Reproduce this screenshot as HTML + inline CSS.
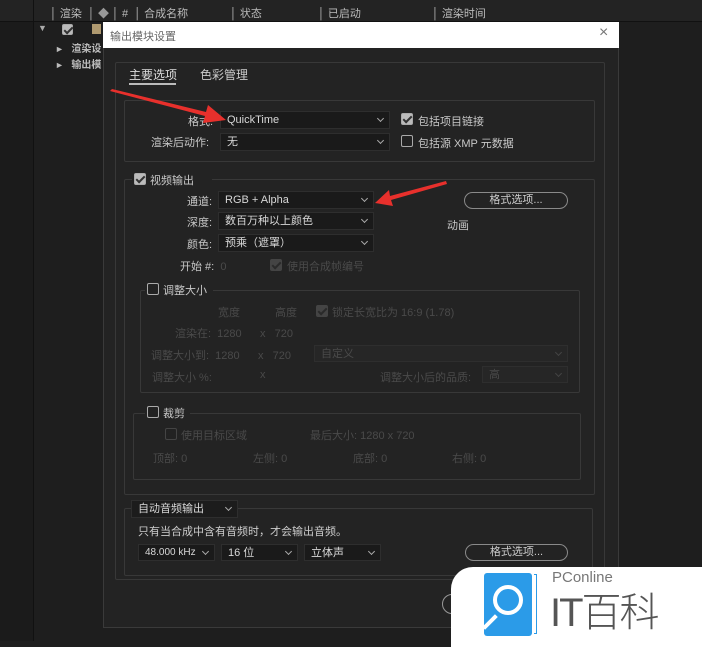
<!DOCTYPE html>
<html><head><meta charset="utf-8"><style>
*{margin:0;padding:0;box-sizing:border-box}
body{width:702px;height:641px;overflow:hidden;background:#1e1e1e;font-family:"Liberation Sans","Noto Sans CJK SC",sans-serif;font-size:11px;color:#c8c8c8;position:relative}
.a{position:absolute;white-space:nowrap}
.fr{position:absolute;border:1px solid #383838;border-radius:2px}
.sel{position:absolute;background:#1a1a1a;border:1px solid #2e2e2e;color:#d8d8d8;padding-left:6px;line-height:16px;font-size:11px}
.sel:after{content:"";position:absolute;right:6px;top:4px;width:4px;height:4px;border-right:1px solid #aaa;border-bottom:1px solid #aaa;transform:rotate(45deg)}
.dis{color:#4a4a4a}
.sel.dis{color:#4a4a4a;background:#262626}
.sel.dis:after{border-color:#444}
.cb{position:absolute;width:12px;height:12px;border:1px solid #aaa;border-radius:2px;background:#222}
.cb.on{background:#bbb}
.cb.on:after{content:"";position:absolute;left:3px;top:0px;width:3px;height:7px;border-right:2px solid #333;border-bottom:2px solid #333;transform:rotate(45deg)}
.cb.d{border-color:#444}
.cb.d.on{background:#444}
.cb.d.on:after{border-color:#2a2a2a}
.btn{position:absolute;border:1px solid #8a8a8a;border-radius:9px;text-align:center;color:#ccc;line-height:15px}
</style></head><body>
<div class="a" style="left:0;top:0;width:702px;height:22px;background:#232323;border-bottom:1px solid #111"></div>
<div class="a" style="left:33px;top:0;width:1px;height:641px;background:#111"></div>
<div class="a" style="left:0;top:22px;width:33px;height:619px;background:#1b1b1b"></div>
<div class="a" style="left:50px;top:5px;color:#bbb">│ 渲染&nbsp;&nbsp;│ <span style="color:#999">◆</span> │ # &nbsp;│ 合成名称</div>
<div class="a" style="left:230px;top:5px;color:#bbb">│ 状态</div>
<div class="a" style="left:318px;top:5px;color:#bbb">│ 已启动</div>
<div class="a" style="left:432px;top:5px;color:#bbb">│ 渲染时间</div>
<div class="a" style="left:38px;top:23px;color:#aaa;font-size:9px">▼</div>
<div class="cb on" style="left:62px;top:24px;width:11px;height:11px"></div>
<div class="a" style="left:92px;top:24px;width:9px;height:10px;background:#b09a70"></div>
<div class="a" style="left:55px;top:40px;color:#bbb;font-size:9px">►&nbsp;&nbsp; <b style="font-size:10px">渲染设</b></div>
<div class="a" style="left:55px;top:56px;color:#bbb;font-size:9px">►&nbsp;&nbsp; <b style="font-size:10px">输出模</b></div>
<div class="a" style="left:103px;top:22px;width:516px;height:606px;background:#232323;border:1px solid #3a3a3a"></div>
<div class="a" style="left:103px;top:22px;width:516px;height:26px;background:#fff"></div>
<div class="a" style="left:110px;top:28px;color:#666">输出模块设置</div>
<div class="a" style="left:599px;top:24px;color:#777;font-size:16px">×</div>
<div class="fr" style="left:115px;top:62px;width:490px;height:518px"></div>
<div class="a" style="left:129px;top:66px;color:#ddd;font-size:12px">主要选项</div>
<div class="a" style="left:129px;top:83px;width:47px;height:2px;background:#bbb"></div>
<div class="a" style="left:200px;top:66px;color:#ccc;font-size:12px">色彩管理</div>
<div class="fr" style="left:124px;top:100px;width:471px;height:62px"></div>
<div class="a" style="left:188px;top:113px">格式:</div>
<div class="sel" style="left:220px;top:111px;width:170px;height:18px">QuickTime</div>
<div class="a" style="left:151px;top:134px">渲染后动作:</div>
<div class="sel" style="left:220px;top:133px;width:170px;height:18px">无</div>
<div class="cb on" style="left:401px;top:113px"></div>
<div class="a" style="left:418px;top:113px">包括项目链接</div>
<div class="cb" style="left:401px;top:135px"></div>
<div class="a" style="left:418px;top:135px">包括源 XMP 元数据</div>
<div class="fr" style="left:124px;top:179px;width:471px;height:316px"></div>
<div class="a" style="left:132px;top:172px;width:80px;height:14px;background:#232323"></div>
<div class="cb on" style="left:134px;top:173px"></div>
<div class="a" style="left:150px;top:172px">视频输出</div>
<div class="a" style="left:187px;top:193px">通道:</div>
<div class="sel" style="left:218px;top:191px;width:156px;height:18px">RGB + Alpha</div>
<div class="a" style="left:187px;top:214px">深度:</div>
<div class="sel" style="left:218px;top:212px;width:156px;height:18px">数百万种以上颜色</div>
<div class="a" style="left:187px;top:236px">颜色:</div>
<div class="sel" style="left:218px;top:234px;width:156px;height:18px">预乘（遮罩）</div>
<div class="btn" style="left:464px;top:192px;width:104px;height:17px">格式选项...</div>
<div class="a" style="left:447px;top:217px">动画</div>
<div class="a" style="left:180px;top:258px">开始 #: <span class="dis">&nbsp;0</span></div>
<div class="cb d on" style="left:270px;top:259px"></div>
<div class="a dis" style="left:287px;top:258px">使用合成帧编号</div>
<div class="fr" style="left:140px;top:290px;width:440px;height:103px"></div>
<div class="a" style="left:145px;top:282px;width:68px;height:14px;background:#232323"></div>
<div class="cb" style="left:147px;top:283px"></div>
<div class="a" style="left:163px;top:282px">调整大小</div>
<div class="a dis" style="left:218px;top:304px">宽度</div>
<div class="a dis" style="left:275px;top:304px">高度</div>
<div class="cb d on" style="left:316px;top:305px"></div>
<div class="a dis" style="left:332px;top:304px">锁定长宽比为 16:9 (1.78)</div>
<div class="a dis" style="left:175px;top:325px">渲染在: &nbsp;1280&nbsp;&nbsp;&nbsp;&nbsp;&nbsp;&nbsp;x&nbsp;&nbsp;&nbsp;720</div>
<div class="a dis" style="left:151px;top:347px">调整大小到: &nbsp;1280&nbsp;&nbsp;&nbsp;&nbsp;&nbsp;&nbsp;x&nbsp;&nbsp;&nbsp;720</div>
<div class="sel dis" style="left:314px;top:345px;width:254px;height:17px">自定义</div>
<div class="a dis" style="left:152px;top:369px">调整大小 %:</div>
<div class="a dis" style="left:260px;top:369px">x</div>
<div class="a dis" style="left:380px;top:369px">调整大小后的品质:</div>
<div class="sel dis" style="left:482px;top:366px;width:86px;height:17px">高</div>
<div class="fr" style="left:133px;top:413px;width:448px;height:67px"></div>
<div class="a" style="left:145px;top:405px;width:45px;height:14px;background:#232323"></div>
<div class="cb" style="left:147px;top:406px"></div>
<div class="a" style="left:163px;top:405px">裁剪</div>
<div class="cb d" style="left:165px;top:428px"></div>
<div class="a dis" style="left:181px;top:427px">使用目标区域</div>
<div class="a dis" style="left:310px;top:427px">最后大小: 1280 x 720</div>
<div class="a dis" style="left:153px;top:450px">顶部: 0</div>
<div class="a dis" style="left:253px;top:450px">左侧: 0</div>
<div class="a dis" style="left:353px;top:450px">底部: 0</div>
<div class="a dis" style="left:452px;top:450px">右侧: 0</div>
<div class="fr" style="left:124px;top:508px;width:469px;height:68px"></div>
<div class="sel" style="left:131px;top:500px;width:107px;height:18px;background:#1c1c1c">自动音频输出</div>
<div class="a" style="left:138px;top:523px;color:#ccc">只有当合成中含有音频时，才会输出音频。</div>
<div class="sel" style="left:138px;top:544px;width:77px;height:17px;font-size:10px">48.000 kHz</div>
<div class="sel" style="left:221px;top:544px;width:77px;height:17px">16 位</div>
<div class="sel" style="left:304px;top:544px;width:77px;height:17px">立体声</div>
<div class="btn" style="left:465px;top:544px;width:103px;height:17px">格式选项...</div>
<div class="a" style="left:442px;top:594px;width:20px;height:20px;border:1px solid #999;border-radius:10px"></div>
<svg class="a" style="left:0;top:0" width="702" height="641">
<polygon points="110,91 112,89 206,112 208,105 226,120 203,123 205,116" fill="#e8302c"/>
<polygon points="446,181 447,184 391,200 393,206 375,203 389,190 390,196" fill="#e8302c"/>
</svg>
<div class="a" style="left:451px;top:567px;width:260px;height:80px;background:#fff;border-top-left-radius:22px"></div>
<div class="a" style="left:484px;top:573px;width:48px;height:63px;background:#2b9be8;border-radius:3px"></div>
<div class="a" style="left:534px;top:574px;width:3px;height:60px;border:1px solid #2b9be8;border-left:none"></div>
<div class="a" style="left:493px;top:585px;width:30px;height:30px;border:4px solid #fff;border-radius:50%"></div>
<div class="a" style="left:481px;top:620px;width:18px;height:4px;background:#fff;transform:rotate(-45deg)"></div>
<div class="a" style="left:552px;top:569px;color:#777;font-size:15px">PConline</div>
<div class="a" style="left:550px;top:588px;color:#555;font-size:40px;letter-spacing:-2px;line-height:50px;font-weight:300">IT百科</div>
</body></html>
